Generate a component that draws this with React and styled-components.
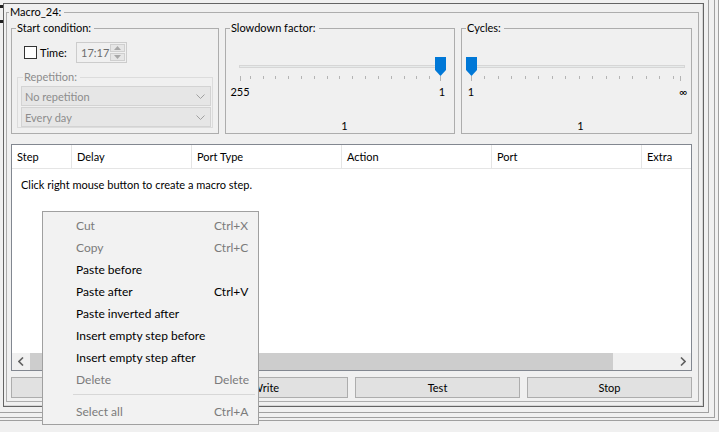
import React from 'react';
import styled, { createGlobalStyle } from 'styled-components';

const Global = createGlobalStyle`
  html, body { margin: 0; padding: 0; background: #f0f0f0; }
  body { font-family: Lato, "Liberation Sans", sans-serif; font-size: 11px; color: #000; }
  * { box-sizing: border-box; }
`;

const Page = styled.div`
  position: relative;
  width: 719px;
  height: 432px;
  overflow: hidden;
  background: #f0f0f0;
`;

const OuterFrame = styled.div`
  display: flex;
  width: 719px;
  height: 421px;
  border-right: 1px solid #a0a0a0;
  border-bottom: 1px solid #a0a0a0;
  padding: 0 3px 2px 0;
`;

const MidFrame = styled.div`
  flex: 1;
  min-width: 0;
  display: flex;
  border-right: 1px solid #a0a0a0;
  border-bottom: 1px solid #a0a0a0;
  padding: 0 5px 4px 0;
`;

const InnerFrame = styled.div`
  flex: 1;
  min-width: 0;
  display: flex;
  border-right: 1px solid #a0a0a0;
  border-bottom: 1px solid #a0a0a0;
  padding: 3px 4px 5px 3px;
`;

const DarkFrame = styled.div`
  position: relative;
  flex: 1;
  min-width: 0;
  display: flex;
  border: 1px solid #646464;
  box-shadow: inset -1px -1px 0 #d6d6d6;
  padding: 0 3px 4px 2px;
`;

const Grip = styled.span`
  position: absolute;
  left: -4px;
  top: ${(p) => p.$top}px;
  width: 3px;
  height: 3px;
  background: #202020;
`;

const GroupBox = styled.fieldset`
  margin: 0;
  padding: 0;
  min-width: 0;
  flex: none;
  border: 1px solid ${(p) => (p.$disabled ? '#dcdcdc' : '#adadad')};
  ${(p) => (p.$height ? `height: ${p.$height}px;` : '')}
  ${(p) => (p.$width ? `width: ${p.$width}px;` : '')}
`;

const Legend = styled.legend`
  margin-left: ${(p) => p.$offset ?? 4}px;
  padding: 0 3px 0 1px;
  line-height: 16px;
  font-size: 11px;
  color: ${(p) => (p.$disabled ? '#8c8c8c' : '#000')};
`;

const MacroBody = styled.div`
  display: flex;
  flex-direction: column;
  padding: 0 6px 3px 4px;
  height: 381px;
`;

const TopRow = styled.div`
  display: flex;
  gap: 6px;
`;

const StartBody = styled.div`
  display: flex;
  flex-direction: column;
  padding: 6px 5px 0 5px;
`;

const TimeRow = styled.div`
  display: flex;
  align-items: center;
  padding-left: 7px;
  height: 21px;
`;

const CheckBox = styled.span`
  width: 13px;
  height: 13px;
  border: 1px solid #333;
  background: #fff;
`;

const CheckLabel = styled.span`
  margin-left: 3px;
  width: 36px;
`;

const Spinner = styled.div`
  display: flex;
  width: 51px;
  height: 21px;
  border: 1px solid #cccccc;
  background: #f0f0f0;
  padding: 1px;
`;

const SpinText = styled.span`
  flex: 1;
  padding-left: 3px;
  line-height: 17px;
  color: #6d6d6d;
`;

const SpinButtons = styled.div`
  display: flex;
  flex-direction: column;
  width: 15px;
  gap: 1px;
`;

const SpinButton = styled.span`
  flex: 1;
  display: flex;
  align-items: center;
  justify-content: center;
  background: #e6e6e6;
  border: 1px solid #cfcfcf;
`;

const RepetitionBox = styled(GroupBox)`
  margin-top: 6px;
`;

const ComboList = styled.div`
  display: flex;
  flex-direction: column;
  gap: 1px;
  padding: 1px 1px 0 3px;
`;

const Combo = styled.div`
  display: flex;
  align-items: center;
  justify-content: space-between;
  height: 20px;
  border: 1px solid #d3d3d3;
  background: #e6e6e6;
  padding: 0 5px 0 3px;
  color: #8d8d8d;
`;

const SliderBody = styled.div`
  display: flex;
  flex-direction: column;
  padding: 21px ${(p) => p.$pr}px 0 ${(p) => p.$pl}px;
`;

const SliderArt = styled.svg`
  display: block;
  overflow: visible;
`;

const ScaleLabels = styled.div`
  display: flex;
  justify-content: space-between;
  margin: 3px -10px 0 -10px;
  line-height: 14px;
`;

const ScaleLabel = styled.span`
  width: 20px;
  text-align: center;
`;

const SliderValue = styled.div`
  margin-top: 20px;
  text-align: center;
  padding-left: 7px;
  line-height: 14px;
`;

const Table = styled.div`
  display: flex;
  flex-direction: column;
  margin-top: 10px;
  height: 227px;
  min-width: 0;
  border: 1px solid #828790;
  background: #fff;
  overflow: hidden;
`;

const Header = styled.div`
  display: flex;
  height: 24px;
  min-width: 0;
  border-bottom: 1px solid #e5e5e5;
  overflow: hidden;
`;

const HeaderCell = styled.div`
  flex: none;
  width: ${(p) => p.$w}px;
  padding-left: 5px;
  line-height: 23px;
  border-right: 1px solid #e5e5e5;
  white-space: nowrap;
`;

const TableBody = styled.div`
  flex: 1;
  padding: 8px 0 0 9px;
  line-height: 16px;
`;

const HScroll = styled.div`
  display: flex;
  height: 17px;
  background: #f0f0f0;
`;

const ScrollArrow = styled.span`
  flex: none;
  width: 17px;
  display: flex;
  align-items: center;
  justify-content: center;
`;

const ScrollTrack = styled.div`
  flex: 1;
  min-width: 0;
  display: flex;
  padding-left: 1px;
`;

const ScrollThumb = styled.div`
  width: ${(p) => p.$w}px;
  background: #cdcdcd;
`;

const Buttons = styled.div`
  display: grid;
  grid-template-columns: repeat(4, minmax(0, 1fr));
  gap: 7px;
  margin-top: 6px;
`;

const Button = styled.div`
  height: 21px;
  border: 1px solid #adadad;
  background: #e1e1e1;
  text-align: center;
  line-height: 19px;
`;

const Menu = styled.div`
  position: absolute;
  left: 42px;
  top: 211px;
  width: 217px;
  height: 214px;
  background: #f2f2f2;
  border: 1px solid #a0a0a0;
  padding: 2px 2px 3px 2px;
  font-size: 12px;
`;

const MenuItem = styled.div`
  display: grid;
  grid-template-columns: 138px auto;
  height: 22px;
  align-items: center;
  padding-left: 31px;
  color: ${(p) => (p.$disabled ? '#7b7b7b' : '#000')};
`;

const MenuSep = styled.div`
  height: 1px;
  margin: 4px 1px 5px 28px;
  background: #d7d7d7;
`;

function Chevron() {
  return (
    <svg width="9" height="5" viewBox="0 0 9 5">
      <path d="M0.5 0.5 L4.5 4.5 L8.5 0.5" fill="none" stroke="#a0a0a0" strokeWidth="1" />
    </svg>
  );
}

function SpinArrow({ down }) {
  return (
    <svg width="7" height="4" viewBox="0 0 7 4">
      <path d={down ? 'M0 0 H7 L3.5 4 Z' : 'M0 4 H7 L3.5 0 Z'} fill="#a8a8a8" />
    </svg>
  );
}

function Slider({ width, ticks, thumbAt }) {
  const h = 25;
  const trackY = 8;
  return (
    <SliderArt width={width} height={h} viewBox={`0 0 ${width} ${h}`}>
      <rect x={-0.5} y={trackY + 0.5} width={width + 2} height={2} fill="#e7eaea" stroke="#d6d6d6" strokeWidth="1" />
      {ticks.map((t, i) => {
        const end = i === 0 || i === ticks.length - 1;
        return <line key={i} x1={t + 0.5} x2={t + 0.5} y1={19} y2={end ? 24 : 22} stroke="#b4b4b4" strokeWidth="1" />;
      })}
      <path
        d={`M${thumbAt - 5} 0 H${thumbAt + 6} V13 L${thumbAt + 0.5} 19 L${thumbAt - 5} 13 Z`}
        fill="#0078d7"
      />
    </SliderArt>
  );
}

const slowTicks = [0, 10, 23, 35, 48, 61, 74, 87, 99, 112, 125, 138, 151, 164, 176, 189, 200];
const cycleTicks = [0, 13, 27, 40, 54, 67, 81, 94, 108, 121, 135, 148, 161, 175, 188, 202, 209];

const menuItems = [
  { label: 'Cut', key: 'Ctrl+X', disabled: true },
  { label: 'Copy', key: 'Ctrl+C', disabled: true },
  { label: 'Paste before' },
  { label: 'Paste after', key: 'Ctrl+V' },
  { label: 'Paste inverted after' },
  { label: 'Insert empty step before' },
  { label: 'Insert empty step after' },
  { label: 'Delete', key: 'Delete', disabled: true },
  { sep: true },
  { label: 'Select all', key: 'Ctrl+A', disabled: true },
];

const columns = [
  { name: 'Step', w: 60 },
  { name: 'Delay', w: 120 },
  { name: 'Port Type', w: 150 },
  { name: 'Action', w: 150 },
  { name: 'Port', w: 150 },
  { name: 'Extra', w: 120 },
];

export default function App() {
  return (
    <Page>
      <Global />
      <OuterFrame>
        <MidFrame>
          <InnerFrame>
            <DarkFrame>
              <Grip $top={1} />
              <Grip $top={16} />
              <GroupBox $width={693}>
                <Legend $offset={2}>Macro_24:</Legend>
                <MacroBody>
                  <TopRow>
                    <GroupBox $width={208} $height={114}>
                      <Legend $offset={4}>Start condition:</Legend>
                      <StartBody>
                        <TimeRow>
                          <CheckBox />
                          <CheckLabel>Time:</CheckLabel>
                          <Spinner>
                            <SpinText>17:17</SpinText>
                            <SpinButtons>
                              <SpinButton><SpinArrow /></SpinButton>
                              <SpinButton><SpinArrow down /></SpinButton>
                            </SpinButtons>
                          </Spinner>
                        </TimeRow>
                        <RepetitionBox $disabled>
                          <Legend $offset={5} $disabled>Repetition:</Legend>
                          <ComboList>
                            <Combo>No repetition<Chevron /></Combo>
                            <Combo>Every day<Chevron /></Combo>
                          </ComboList>
                        </RepetitionBox>
                      </StartBody>
                    </GroupBox>
                    <GroupBox $width={230} $height={114}>
                      <Legend $offset={4}>Slowdown factor:</Legend>
                      <SliderBody $pl={14} $pr={12}>
                        <Slider width={202} ticks={slowTicks} thumbAt={200} />
                        <ScaleLabels>
                          <ScaleLabel>255</ScaleLabel>
                          <ScaleLabel>1</ScaleLabel>
                        </ScaleLabels>
                        <SliderValue>1</SliderValue>
                      </SliderBody>
                    </GroupBox>
                    <GroupBox $width={231} $height={114}>
                      <Legend $offset={4}>Cycles:</Legend>
                      <SliderBody $pl={9} $pr={8}>
                        <Slider width={212} ticks={cycleTicks} thumbAt={0} />
                        <ScaleLabels>
                          <ScaleLabel>1</ScaleLabel>
                          <ScaleLabel>∞</ScaleLabel>
                        </ScaleLabels>
                        <SliderValue>1</SliderValue>
                      </SliderBody>
                    </GroupBox>
                  </TopRow>
                  <Table>
                    <Header>
                      {columns.map((c) => (
                        <HeaderCell key={c.name} $w={c.w}>{c.name}</HeaderCell>
                      ))}
                    </Header>
                    <TableBody>Click right mouse button to create a macro step.</TableBody>
                    <HScroll>
                      <ScrollArrow>
                        <svg width="6" height="9" viewBox="0 0 6 9">
                          <path d="M5 0.5 L1 4.5 L5 8.5" fill="none" stroke="#606060" strokeWidth="1.6" />
                        </svg>
                      </ScrollArrow>
                      <ScrollTrack>
                        <ScrollThumb $w={583} />
                      </ScrollTrack>
                      <ScrollArrow>
                        <svg width="6" height="9" viewBox="0 0 6 9">
                          <path d="M1 0.5 L5 4.5 L1 8.5" fill="none" stroke="#606060" strokeWidth="1.6" />
                        </svg>
                      </ScrollArrow>
                    </HScroll>
                  </Table>
                  <Buttons>
                    <Button />
                    <Button>Write</Button>
                    <Button>Test</Button>
                    <Button>Stop</Button>
                  </Buttons>
                </MacroBody>
              </GroupBox>
            </DarkFrame>
          </InnerFrame>
        </MidFrame>
      </OuterFrame>
      <Menu>
        {menuItems.map((m, i) =>
          m.sep ? (
            <MenuSep key={i} />
          ) : (
            <MenuItem key={i} $disabled={m.disabled}>
              <span>{m.label}</span>
              <span>{m.key}</span>
            </MenuItem>
          )
        )}
      </Menu>
    </Page>
  );
}
